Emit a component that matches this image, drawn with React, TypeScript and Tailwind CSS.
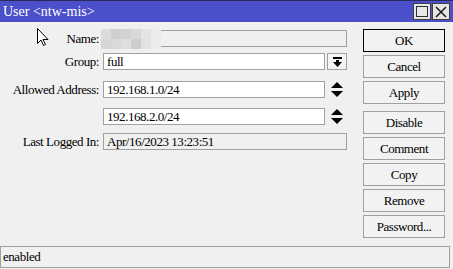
import React from "react";

function UpDown() {
    return (
        <svg width="12" height="15" viewBox="0 0 12 15">
            <path d="M6 0 L12 6 L0 6 Z" fill="#000" />
            <path d="M0 9 L12 9 L6 15 Z" fill="#000" />
        </svg>
    );
}

function DropIcon() {
    return (
        <svg width="9" height="10" viewBox="0 0 9 10">
            <rect x="0" y="0" width="9" height="2" fill="#000" />
            <rect x="3" y="3" width="3" height="3" fill="#000" />
            <path d="M0 5 L9 5 L4.5 10 Z" fill="#000" />
        </svg>
    );
}

function Cursor() {
    return (
        <svg width="12" height="19" viewBox="0 0 12 19" className="absolute left-[37px] top-[28px]">
            <path
                d="M0.5 0.5 L0.5 15.5 L4 12 L6.5 17.5 L8.5 16.5 L6 11.5 L11 11.5 Z"
                fill="#fff"
                stroke="#000"
                strokeWidth="1"
            />
        </svg>
    );
}

function Label({ children }: { children?: React.ReactNode }) {
    return <div className="w-[100px] shrink-0 pr-[1px] text-right leading-[17px]">{children}</div>;
}

function Btn({ label, primary, className }: { label: string; primary?: boolean; className?: string }) {
    return (
        <div
            className={
                "h-[23px] w-[82px] flex items-center justify-center bg-[#f2f2f2] border leading-none " +
                (primary ? "border-black " : "border-[#a0a0a0] ") +
                (className ?? "")
            }
        >
            {label}
        </div>
    );
}

const blur = [
    "bg-[#dcdcdc]", "bg-[#cfcfcf]", "bg-[#d2d2d2]", "bg-[#d9d9d9]", "bg-[#e4e4e4]", "bg-[#ebebeb]",
    "bg-[#d6d6d6]", "bg-[#d9d9d9]", "bg-[#dedede]", "bg-[#cdcdcd]", "bg-[#e2e2e2]", "bg-[#ececec]",
];

export default function App() {
    return (
        <div className="relative w-[453px] h-[269px] bg-[#f0f0f0] text-[13px] tracking-[-0.45px] text-black flex flex-col overflow-hidden font-['Liberation_Serif',serif]">
            {/* Title bar */}
            <div className="h-[22px] shrink-0 bg-[#4b4fc9] border-t border-[#2a2a5a] flex items-center pl-[3px] pr-[3px]">
                <div className="flex-1 text-white text-[14px] tracking-normal leading-none">User &lt;ntw-mis&gt;</div>
                <div className="flex gap-[1px]">
                    <div className="w-[18px] h-[17px] bg-[#e6e6e6] border border-[#404040] flex items-center justify-center">
                        <div className="w-[12px] h-[11px] border border-[#303030]" />
                    </div>
                    <div className="w-[18px] h-[17px] bg-[#e6e6e6] border border-[#404040] flex items-center justify-center">
                        <svg width="12" height="12" viewBox="0 0 12 12">
                            <path d="M1 1 L11 11 M11 1 L1 11" stroke="#202020" strokeWidth="1.6" />
                        </svg>
                    </div>
                </div>
            </div>

            <Cursor />

            {/* Body */}
            <div className="flex flex-1">
                <div className="w-[347px] flex flex-col">
                    <div className="flex mt-[8px] h-[17px]">
                        <Label>Name:</Label>
                        <div className="relative ml-[3px] flex-1 border border-[#a0a0a0] bg-[#f0f0f0]">
                            <div className="absolute left-[-3px] top-[-2px] grid grid-cols-6">
                                {blur.map((c, i) => (
                                    <div key={i} className={"w-[10px] h-[10px] " + c} />
                                ))}
                            </div>
                        </div>
                    </div>

                    <div className="flex mt-[6px] h-[17px]">
                        <Label>Group:</Label>
                        <div className="ml-[3px] w-[222px] border border-[#a0a0a0] bg-white pl-[3px] leading-[15px]">full</div>
                        <div className="ml-[2px] w-[20px] border border-[#a0a0a0] bg-[#f4f4f4] flex items-center justify-center">
                            <DropIcon />
                        </div>
                    </div>

                    <div className="flex mt-[11px] h-[17px]">
                        <Label>Allowed Address:</Label>
                        <div className="ml-[3px] w-[222px] border border-[#a0a0a0] bg-white pl-[3px] leading-[15px]">192.168.1.0/24</div>
                        <div className="flex-1 flex items-center justify-center pl-[1px]">
                            <UpDown />
                        </div>
                    </div>

                    <div className="flex mt-[10px] h-[17px]">
                        <Label />
                        <div className="ml-[3px] w-[222px] border border-[#a0a0a0] bg-white pl-[3px] leading-[15px]">192.168.2.0/24</div>
                        <div className="flex-1 flex items-center justify-center pl-[1px]">
                            <UpDown />
                        </div>
                    </div>

                    <div className="flex mt-[8px] h-[17px]">
                        <Label>Last Logged In:</Label>
                        <div className="ml-[3px] flex-1 border border-[#a0a0a0] bg-[#f0f0f0] pl-[3px] leading-[15px]">
                            Apr/16/2023 13:23:51
                        </div>
                    </div>
                </div>

                <div className="ml-[16px] mt-[7px] flex flex-col gap-[3px]">
                    <Btn label="OK" primary />
                    <Btn label="Cancel" />
                    <Btn label="Apply" />
                    <Btn label="Disable" className="mt-[4px]" />
                    <Btn label="Comment" />
                    <Btn label="Copy" />
                    <Btn label="Remove" />
                    <Btn label="Password..." />
                </div>
            </div>

            {/* Status bar */}
            <div className="h-[22px] w-[450px] shrink-0 mb-[1px] border border-[#a0a0a0] pl-[2px] leading-[20px]">enabled</div>
        </div>
    );
}
